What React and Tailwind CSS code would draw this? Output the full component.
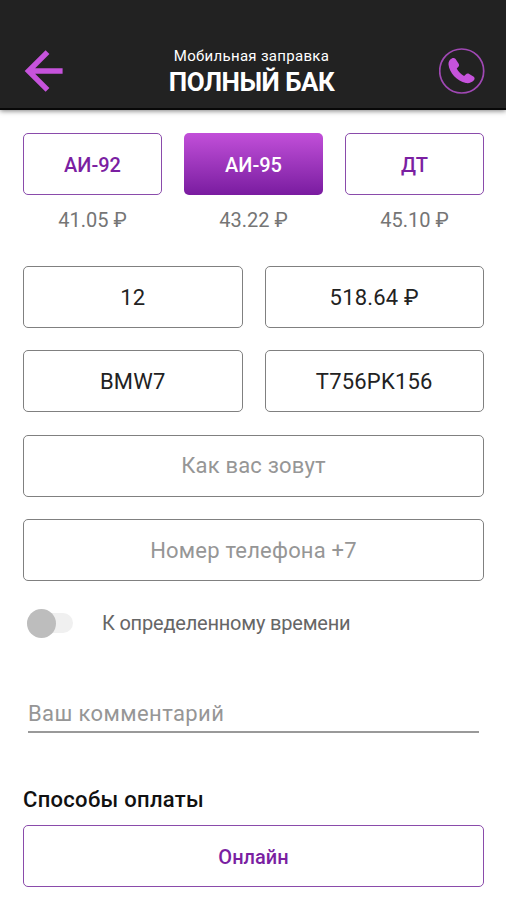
import React from 'react';

const FUELS = [
  { name: 'АИ-92', price: '41.05 ₽' },
  { name: 'АИ-95', price: '43.22 ₽', active: true },
  { name: 'ДТ', price: '45.10 ₽' },
];

const Field = ({ value, placeholder }) => (
  <div
    className={`flex-1 h-[62px] flex items-center justify-center rounded-[5px] border border-[#808080] text-[22px] tracking-[0.2px] ${
      placeholder ? 'text-[#969696]' : 'text-[#222222]'
    }`}
  >
    {value || placeholder}
  </div>
);

const Header = () => (
  <header className="h-[110px] bg-[#222222] flex items-end justify-between pl-[24px] pr-[21px] border-b-2 border-[#080808] shadow-[0_1px_5px_rgba(0,0,0,0.5)]">
    <svg className="w-[40px] h-[42px] mb-[16px]" viewBox="0 0 40 42" fill="none" stroke="#c653dc" strokeWidth="5.4">
      <path d="M23.5 2.2 4.5 21l19 18.8M5 21h33.6" />
    </svg>
    <div className="flex flex-col items-center text-white mb-[10px]">
      <p className="text-[15px] leading-[20px] tracking-[0.3px]">Мобильная заправка</p>
      <h1 className="text-[26px] leading-[32px] font-bold tracking-[-0.5px]">ПОЛНЫЙ БАК</h1>
    </div>
    <svg className="w-[46px] h-[46px] mb-[14px]" viewBox="0 0 46 46">
      <circle cx="22.7" cy="23" r="22" fill="none" stroke="#a048b4" strokeWidth="1.7" />
      <path
        fill="#c653dc"
        d="M12.8 10.4c1.600-.8 3.200-.3 4.100 1.100l2.800 4.300c.7 1.200.5 2.400-.5 3.300l-1.500 1.500c1.600 3 4.300 5.700 7.400 7.300l1.600-1.500c1-.9 2.300-1.100 3.500-.4l4.200 2.600c1.400.9 1.600 2.500.5 3.700-2 2.200-4.900 3.300-8 2.700C18.200 33.300 10.200 24.600 9.500 16.500c-.2-2.800.9-4.900 3.300-6.100z"
      />
    </svg>
  </header>
);

export default function App() {
  return (
    <div className="w-[506px] h-[900px] overflow-hidden bg-white font-[Roboto,sans-serif]">
      <Header />
      <main className="pl-[23px] pr-[22px] pt-[23px]">
        <div className="grid grid-cols-3 gap-[22px]">
          {FUELS.map((fuel) => (
            <div key={fuel.name} className="flex flex-col items-center">
              <button
                className={`w-full h-[62px] pt-[2px] rounded-[5px] text-[20px] font-medium ${
                  fuel.active
                    ? 'bg-linear-to-b from-[#c24fd9] to-[#7a1ba0] text-white'
                    : 'border border-[#8a4bab] text-[#7b1fa2]'
                }`}
              >
                {fuel.name}
              </button>
              <p className="mt-[11px] text-[20px] leading-[28px] text-[#757575]">{fuel.price}</p>
            </div>
          ))}
        </div>

        <div className="mt-[32px] flex flex-col gap-[22.4px]">
          <div className="flex gap-[22px]">
            <Field value="12" />
            <Field value="518.64 ₽" />
          </div>
          <div className="flex gap-[22px]">
            <Field value="BMW7" />
            <Field value="T756PK156" />
          </div>
          <div className="flex">
            <Field placeholder="Как вас зовут" />
          </div>
          <div className="flex">
            <Field placeholder="Номер телефона +7" />
          </div>
        </div>

        <div className="mt-[27px] pl-[4px] h-[30px] flex items-center">
          <span className="w-[46px] h-[20px] rounded-full bg-[#f0f0f0] flex items-center">
            <span className="size-[29px] shrink-0 rounded-full bg-[#bdbdbd]" />
          </span>
          <span className="ml-[29px] text-[20px] tracking-[-0.2px] text-[#666666]">К определенному времени</span>
        </div>

        <div className="mt-[59px] mx-[5px] h-[36px] border-b-2 border-[#999999] text-[22px] leading-[33px] tracking-[0.4px] text-[#969696]">
          Ваш комментарий
        </div>

        <h2 className="mt-[51px] text-[22px] leading-[32px] font-medium tracking-[0.3px] text-[#111111]">Способы оплаты</h2>
        <button className="mt-[9px] w-full h-[62px] pt-[2px] rounded-[5px] border border-[#8a4bab] text-[20px] font-medium text-[#7b1fa2]">
          Онлайн
        </button>
      </main>
    </div>
  );
}
